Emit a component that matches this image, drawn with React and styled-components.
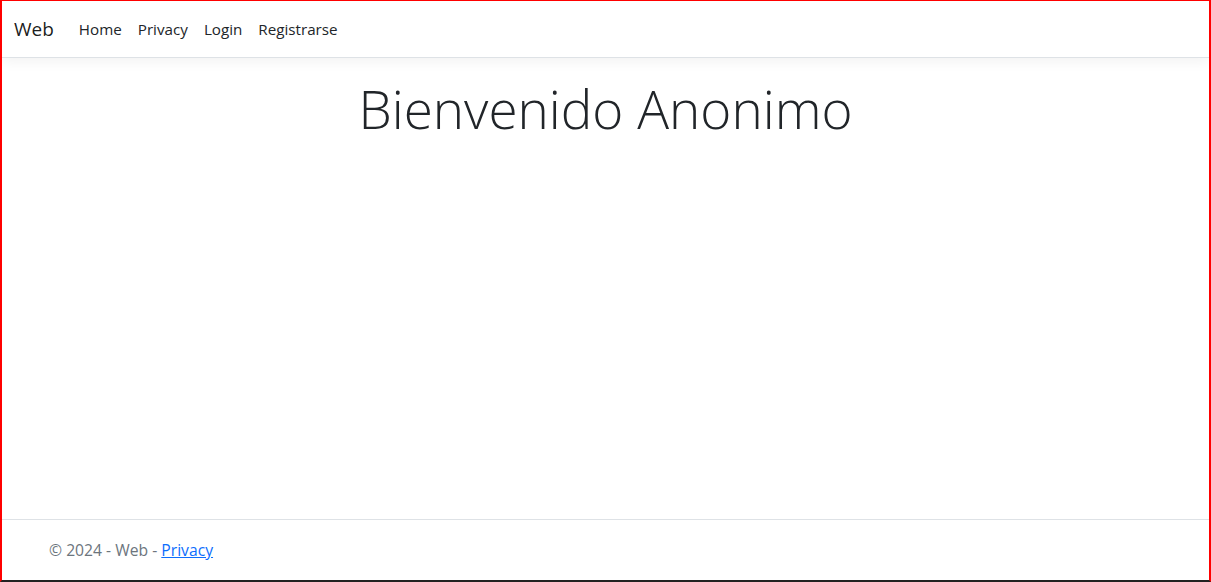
import React from 'react';
import styled, { createGlobalStyle } from 'styled-components';

const GlobalStyle = createGlobalStyle`
  html, body {
    margin: 0;
    padding: 0;
    background: #fff;
  }
  body {
    font-family: "Open Sans", "Noto Sans", "Liberation Sans", sans-serif;
    font-size: 16px;
    line-height: 1.5;
    color: #212529;
  }
  * { box-sizing: border-box; }
`;

const Frame = styled.div`
  height: 582px;
  display: flex;
  flex-direction: column;
  border-top: 1px solid #ff0000;
  border-left: 2px solid #ff0000;
  border-right: 2px solid #ff0000;
  border-bottom: 2px solid #222;
  overflow: hidden;
`;

const Navbar = styled.nav`
  display: flex;
  align-items: center;
  padding: 8px 12px;
  border-bottom: 1px solid #dee2e6;
  box-shadow: 0 4px 12px rgba(0, 0, 0, 0.05);
  margin-bottom: 16px;
  background: #fff;
`;

const Brand = styled.a`
  font-size: 19px;
  color: rgba(0, 0, 0, 0.9);
  text-decoration: none;
  padding: 5px 0;
  margin-right: 17px;
  line-height: 30px;
`;

const NavList = styled.ul`
  display: flex;
  list-style: none;
  margin: 0;
  padding: 0;
`;

const NavLink = styled.a`
  display: block;
  padding: 8px 8px;
  font-size: 15.2px;
  line-height: 24px;
  color: #212529;
  text-decoration: none;
`;

const Main = styled.main`
  flex: 1;
  padding-top: 3px;
  text-align: center;
`;

const Display = styled.h1`
  margin: 0 0 8px;
  font-size: 53px;
  font-weight: 300;
  line-height: 1.2;
  color: #212529;
`;

const Footer = styled.footer`
  border-top: 1px solid #dee2e6;
  line-height: 60px;
  white-space: nowrap;
  color: #6c757d;
  font-size: 15.7px;
  padding: 0 12px 0 47px;
`;

const FooterLink = styled.a`
  color: #0d6efd;
  text-decoration: underline;
`;

const links = ['Home', 'Privacy', 'Login', 'Registrarse'];

export default function App() {
  return (
    <>
      <GlobalStyle />
      <Frame>
        <Navbar>
          <Brand href="#">Web</Brand>
          <NavList>
            {links.map((l) => (
              <li key={l}>
                <NavLink href="#">{l}</NavLink>
              </li>
            ))}
          </NavList>
        </Navbar>
        <Main>
          <Display>Bienvenido Anonimo</Display>
        </Main>
        <Footer>
          © 2024 - Web - <FooterLink href="#">Privacy</FooterLink>
        </Footer>
      </Frame>
    </>
  );
}
